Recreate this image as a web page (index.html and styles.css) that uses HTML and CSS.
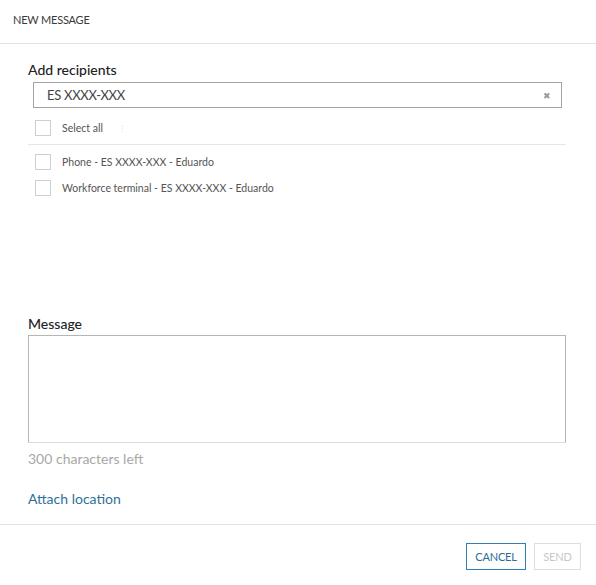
FILE: index.html
```html
<!DOCTYPE html>
<html>
<head>
<meta charset="utf-8">
<link rel="stylesheet" href="styles.css">
</head>
<body>
<div class="dialog">
  <div class="header">NEW MESSAGE</div>
  <div class="content">
    <div class="label label-recipients">Add recipients</div>
    <div class="search">
      <span class="search-text">ES XXXX-XXX</span>
      <span class="clear">&#x2716;</span>
    </div>
    <div class="row select-all">
      <span class="box"></span><span class="row-text">Select all</span><span class="tick">&#x205D;</span>
    </div>
    <div class="sep"></div>
    <div class="row first">
      <span class="box"></span><span class="row-text">Phone - ES XXXX-XXX - Eduardo</span>
    </div>
    <div class="row">
      <span class="box"></span><span class="row-text">Workforce terminal - ES XXXX-XXX - Eduardo</span>
    </div>
    <div class="label label-message">Message</div>
    <div class="textarea"></div>
    <div class="counter">300 characters left</div>
    <div class="attach">Attach location</div>
  </div>
  <div class="footer">
    <button class="btn btn-cancel">CANCEL</button>
    <button class="btn btn-send">SEND</button>
  </div>
</div>
</body>
</html>
```

FILE: styles.css
```css
html, body {
  margin: 0;
  padding: 0;
  background: #fff;
}
body {
  font-family: Lato, "Open Sans", "Liberation Sans", sans-serif;
  color: #333;
  width: 596px;
  height: 585px;
  overflow: hidden;
}
.dialog {
  display: flex;
  flex-direction: column;
}
.header {
  height: 44px;
  box-sizing: border-box;
  padding: 13px 0 0 13px;
  font-size: 11px;
  line-height: 14px;
  color: #3a3a3a;
  letter-spacing: -0.2px;
  border-bottom: 1px solid #e2e2e2;
}
.content {
  padding: 0 30px 0 28px;
  display: flex;
  flex-direction: column;
}
.label {
  font-size: 14px;
  line-height: 18px;
  color: #222;
  font-weight: 500;
}
.label-recipients {
  margin-top: 17px;
}
.search {
  margin: 3px 4px 0 5px;
  height: 26px;
  box-sizing: border-box;
  border: 1px solid #a3a3a3;
  display: flex;
  align-items: center;
  justify-content: space-between;
  padding: 0 10px 0 13px;
}
.search-text {
  font-size: 13px;
  color: #444;
  letter-spacing: -0.3px;
}
.clear {
  font-size: 9px;
  color: #999;
}
.row {
  display: flex;
  align-items: center;
  height: 16px;
  margin-left: 7px;
}
.select-all {
  margin-top: 12px;
}
.box {
  width: 16px;
  height: 16px;
  box-sizing: border-box;
  border: 1px solid #cfcfcf;
  flex: none;
}
.row-text {
  font-size: 10.5px;
  color: #555;
  margin-left: 11px;
}
.tick {
  font-size: 9px;
  color: #e4e4e4;
  margin-left: 18px;
}
.sep {
  margin-top: 8px;
  height: 1px;
  background: #e6e6e6;
}
.row.first {
  margin-top: 9px;
}
.row.first + .row {
  margin-top: 10px;
}
.label-message {
  margin-top: 119px;
}
.textarea {
  margin-top: 2px;
  height: 108px;
  box-sizing: border-box;
  border: 1px solid #b5b5b5;
  border-bottom-color: #dcdcdc;
}
.counter {
  margin-top: 8px;
  font-size: 14px;
  line-height: 16px;
  color: #a8a8a8;
}
.attach {
  margin-top: 24px;
  font-size: 14px;
  line-height: 16px;
  color: #2e6f9a;
}
.footer {
  margin-top: 17px;
  border-top: 1px solid #e2e2e2;
  display: flex;
  justify-content: flex-end;
  gap: 8px;
  padding: 18px 15px 0 0;
}
.btn {
  font-family: Lato, "Open Sans", "Liberation Sans", sans-serif;
  font-size: 11px;
  height: 27px;
  background: #fff;
  padding: 0;
  letter-spacing: -0.2px;
}
.btn-cancel {
  width: 60px;
  border: 1px solid #2d7fb5;
  color: #2a6d96;
}
.btn-send {
  width: 47px;
  border: 1px solid #dedede;
  color: #c8c8c8;
}
```
